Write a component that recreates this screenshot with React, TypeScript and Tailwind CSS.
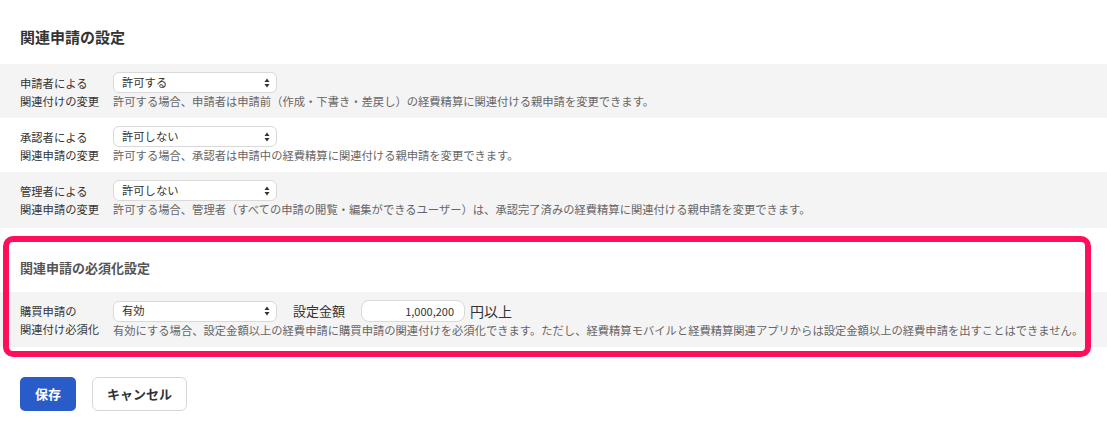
import React from "react"

const font = { fontFamily: '"Noto Sans CJK JP", "Noto Sans", sans-serif' }

function SelectArrow() {
  return (
    <svg width="6" height="10" viewBox="0 0 6 10" className="absolute right-[6px] top-1/2 -translate-y-1/2">
      <path d="M3 0.5 L5.5 4 L0.5 4 Z" fill="#333" />
      <path d="M3 9.5 L5.5 6 L0.5 6 Z" fill="#333" />
    </svg>
  )
}

function FakeSelect({ value }: { value: string }) {
  return (
    <div className="relative flex h-[21px] w-[164px] items-center rounded-[6px] border border-[#d9d9d9] bg-white pl-[8px] text-[11.3px] leading-none text-[#333]">
      {value}
      <SelectArrow />
    </div>
  )
}

type RowProps = {
  label: [string, string]
  value: string
  desc: string
  gray?: boolean
  extra?: React.ReactNode
}

function SettingRow({ label, value, desc, gray, extra }: RowProps) {
  return (
    <div className={`flex px-5 pt-2 pb-2 ${gray ? "bg-[#f5f4f5]" : "bg-white"}`}>
      <div className="w-[93px] shrink-0 pt-[2px] text-[11.3px] leading-[18px] text-[#333]">
        {label[0]}
        <br />
        {label[1]}
      </div>
      <div className="flex flex-col">
        <div className="flex items-center">
          <FakeSelect value={value} />
          {extra}
        </div>
        <p className="text-[11.3px] leading-[17px] text-[#666]">{desc}</p>
      </div>
    </div>
  )
}

export default function App() {
  return (
    <div className="min-h-[430px] w-full bg-white" style={font}>
      {/* 関連申請の設定 */}
      <div className="px-5 pt-[28px] pb-[18px]">
        <h2 className="text-[15px] font-bold leading-[18px] text-[#333]">関連申請の設定</h2>
      </div>
      <SettingRow
        gray
        label={["申請者による", "関連付けの変更"]}
        value="許可する"
        desc="許可する場合、申請者は申請前（作成・下書き・差戻し）の経費精算に関連付ける親申請を変更できます。"
      />
      <SettingRow
        label={["承認者による", "関連申請の変更"]}
        value="許可しない"
        desc="許可する場合、承認者は申請中の経費精算に関連付ける親申請を変更できます。"
      />
      <SettingRow
        gray
        label={["管理者による", "関連申請の変更"]}
        value="許可しない"
        desc="許可する場合、管理者（すべての申請の閲覧・編集ができるユーザー）は、承認完了済みの経費精算に関連付ける親申請を変更できます。"
      />
      <div className="h-[2px] bg-[#f5f4f5]" />

      {/* 関連申請の必須化設定 */}
      <div className="relative">
        <div className="px-5 pt-[31px] pb-[15px]">
          <h3 className="text-[13px] font-semibold leading-[18px] text-[#555]">関連申請の必須化設定</h3>
        </div>
        <SettingRow
          gray
          label={["購買申請の", "関連付け必須化"]}
          value="有効"
          desc="有効にする場合、設定金額以上の経費申請に購買申請の関連付けを必須化できます。ただし、経費精算モバイルと経費精算関連アプリからは設定金額以上の経費申請を出すことはできません。"
          extra={
            <div className="ml-4 flex items-center">
              <span className="text-[13px] text-[#333]">設定金額</span>
              <div className="ml-4 flex h-[22px] w-[104px] items-center justify-end rounded-[8px] border border-[#d9d9d9] bg-white pr-[10px] text-[11px] text-[#333]">
                1,000,200
              </div>
              <span className="ml-[5px] text-[14px] text-[#333]">円以上</span>
            </div>
          }
        />
        {/* 注釈の枠 */}
        <div className="pointer-events-none absolute left-[3px] top-[8px] h-[121px] w-[1088px] rounded-[10px] border-[6px] border-[#ff0f5b]" />
      </div>

      {/* ボタン */}
      <div className="mt-[30px] flex gap-4 px-5">
        <button className="h-[34px] w-[56px] rounded-[5px] bg-[#2a5cc9] text-[13px] font-bold text-white">保存</button>
        <button className="h-[34px] w-[95px] rounded-[6px] border border-[#d6d6d6] bg-white text-[13px] font-bold text-[#333]">
          キャンセル
        </button>
      </div>
    </div>
  )
}
